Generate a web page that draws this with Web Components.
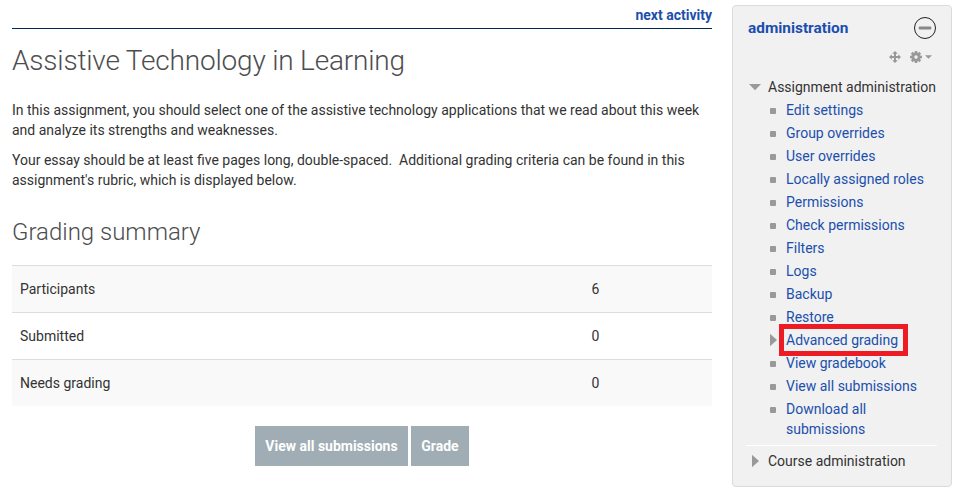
<!DOCTYPE html>
<html lang="en">
<head>
<meta charset="utf-8">
<title>Assistive Technology in Learning</title>
<style>
html,body{margin:0;background:#fff}
body{width:962px;height:496px;overflow:hidden;font:14px/20px Roboto,sans-serif;color:#333}
</style>
</head>
<body>
<course-page></course-page>
<script>
const define = (name, html) => customElements.define(name, class extends HTMLElement {
  constructor() {
    super();
    const t = document.createElement('template');
    t.innerHTML = html;
    this.attachShadow({ mode: 'open' }).append(t.content.cloneNode(true));
  }
});

define('activity-nav', `<style>
:host{display:flex;justify-content:flex-end;box-sizing:border-box;height:29px;padding-top:5px;border-bottom:1px solid #002855;font-weight:700;color:#1b4fad}
</style><slot></slot>`);

define('page-heading', `<style>
:host{display:block}
h2{margin:0;font-weight:300;font-size:28px;line-height:40px;letter-spacing:-.19px;color:#4d4d4f;white-space:nowrap}
:host([minor]) h2{font-size:24px;letter-spacing:0}
</style><h2><slot></slot></h2>`);

define('summary-row', `<style>
:host{display:grid;grid-template-columns:571.5px 1fr;box-sizing:border-box;height:47px;border-top:1px solid #ddd;padding:13px 8px}
:host([shaded]){background:#f9f9f9}
</style><slot></slot><slot name="value"></slot>`);

define('action-button', `<style>
:host{display:block}
button{display:block;box-sizing:border-box;width:100%;height:40px;border:0;padding:0;background:#a0adb4;color:#fff;font:700 14px/20px Roboto,sans-serif;white-space:nowrap}
</style><button><slot></slot></button>`);

define('tree-heading', `<style>
:host{display:grid;grid-template-columns:20px 1fr;height:20px;white-space:nowrap}
svg{display:block;width:20px;height:20px;fill:#999}
.right{display:none}
:host([collapsed]) .right{display:block}
:host([collapsed]) .down{display:none}
</style>
<svg class="down" viewBox="0 0 20 20"><path d="M1 7h12l-6 6.3z"/></svg>
<svg class="right" viewBox="0 0 20 20"><path d="M4 3.7l7 6.3-7 6.3z"/></svg>
<span><slot></slot></span>`);

define('tree-item', `<style>
:host{display:grid;grid-template-columns:16px 1fr;color:#1b4fad;margin-bottom:3px}
svg{display:block;width:16px;height:20px;fill:#999}
.arrow{display:none}
:host([branch]) .arrow{display:block}
:host([branch]) .dot{display:none}
.label{position:relative;justify-self:start}
:host([marked]) .label::after{content:"";position:absolute;left:-7px;top:-6px;box-sizing:border-box;width:129px;height:32px;border:5px solid #ed1c24}
</style>
<svg class="dot" viewBox="0 0 16 20"><rect y="8" width="6" height="6" rx="1"/></svg>
<svg class="arrow" viewBox="0 0 16 20"><path d="M0 3.7l7 6.3-7 6.3z"/></svg>
<span class="label"><slot></slot></span>`);

define('admin-block', `<style>
:host{display:block;box-sizing:border-box;width:220px;height:482px;border:1px solid #d5dde3;border-radius:4px;background:#f1f1f1;padding:11px 14px 0 15px}
header{display:flex;justify-content:space-between;align-items:center;height:22px;font-weight:700;font-size:15.4px;color:#1b4fad}
header svg{width:24px;height:24px}
.tools{display:flex;justify-content:flex-end;height:38px;padding:10px 4px 0 0;box-sizing:border-box}
.tools svg{width:46px;height:16px}
.items{padding:3px 0 0 22px}
.rule{height:1px;background:#fff;margin:6px 0 5px -2px}
svg{display:block}
</style>
<header><span><slot name="title"></slot></span>
<svg viewBox="0 0 24 24"><circle cx="12" cy="12" r="10.5" fill="none" stroke="#222"/><rect x="5.7" y="10.6" width="12.6" height="2.8" rx="1" fill="#888"/></svg></header>
<div class="tools"><svg viewBox="0 0 46 16" fill="#999">
<path d="M8 2l2.800 2.800H9V7h2.200V5.200L14 8l-2.800 2.800V9H9v2.200h1.800L8 14l-2.800-2.800H7V9H4.800v1.800L2 8l2.800-2.800V7H7V4.800H5.200z"/>
<g transform="translate(29 8)"><circle r="3.1" fill="none" stroke="#999" stroke-width="2.8"/><g><rect x="-1.300" y="-6" width="2.600" height="2.500"/><rect x="-1.300" y="3.500" width="2.600" height="2.500"/><rect x="-6" y="-1.300" width="2.500" height="2.600"/><rect x="3.500" y="-1.300" width="2.500" height="2.600"/></g><g transform="rotate(45)"><rect x="-1.300" y="-6" width="2.600" height="2.500"/><rect x="-1.300" y="3.500" width="2.600" height="2.500"/><rect x="-6" y="-1.300" width="2.500" height="2.600"/><rect x="3.500" y="-1.300" width="2.500" height="2.600"/></g></g>
<path d="M38 6.200h7l-3.500 3.500z"/></svg></div>
<tree-heading><slot name="branch"></slot></tree-heading>
<div class="items"><slot></slot></div>
<div class="rule"></div>
<tree-heading collapsed><slot name="course"></slot></tree-heading>`);

define('course-page', `<style>
:host{display:grid;grid-template-columns:700px 220px;column-gap:20px;padding:0 10px 0 12px}
page-heading{margin-top:12px}
p{margin:0 0 10px;white-space:pre-line}
.text{margin-top:19px}
page-heading[minor]{margin-top:22px;margin-bottom:13px}
.actions{display:flex;justify-content:center;gap:3px;margin-top:20px}
.wide{width:153px}.narrow{width:58px}
admin-block{margin-top:5px}
</style>
<main>
<activity-nav>next activity</activity-nav>
<page-heading>Assistive Technology in Learning</page-heading>
<div class="text"><p>In this assignment, you should select one of the assistive technology applications that we read about this week
and analyze its strengths and weaknesses.</p>
<p>Your essay should be at least five pages long, double-spaced.&nbsp; Additional grading criteria can be found in this
assignment's rubric, which is displayed below.</p></div>
<page-heading minor>Grading summary</page-heading>
<summary-row shaded>Participants<span slot="value">6</span></summary-row>
<summary-row>Submitted<span slot="value">0</span></summary-row>
<summary-row shaded>Needs grading<span slot="value">0</span></summary-row>
<div class="actions"><action-button class="wide">View all submissions</action-button><action-button class="narrow">Grade</action-button></div>
</main>
<admin-block><span slot="title">administration</span><span slot="branch">Assignment administration</span>
<tree-item>Edit settings</tree-item><tree-item>Group overrides</tree-item><tree-item>User overrides</tree-item><tree-item>Locally assigned roles</tree-item><tree-item>Permissions</tree-item><tree-item>Check permissions</tree-item><tree-item>Filters</tree-item><tree-item>Logs</tree-item><tree-item>Backup</tree-item><tree-item>Restore</tree-item><tree-item branch marked>Advanced grading</tree-item><tree-item>View gradebook</tree-item><tree-item>View all submissions</tree-item><tree-item>Download all<br>submissions</tree-item>
<span slot="course">Course administration</span></admin-block>`);
</script>
</body>
</html>
